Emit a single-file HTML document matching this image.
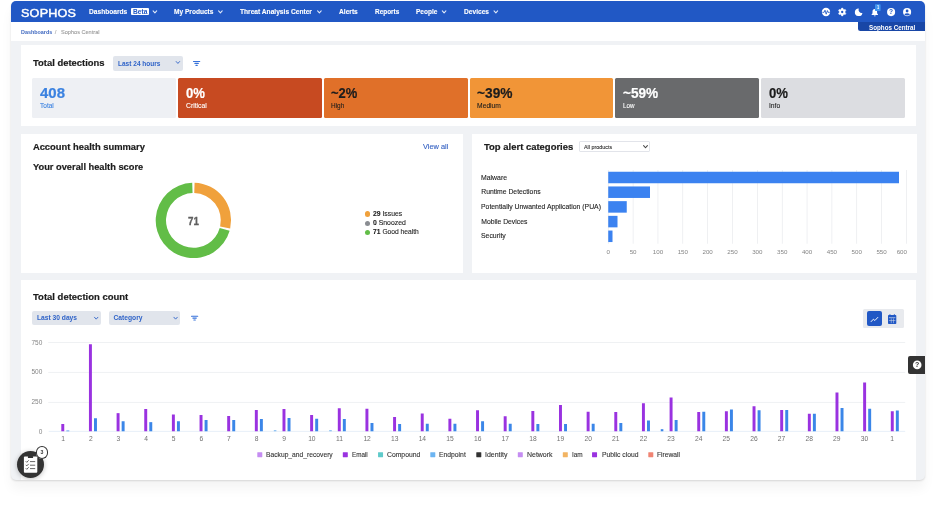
<!DOCTYPE html>
<html lang="en"><head><meta charset="utf-8"><title>Sophos Central - Dashboards</title>
<style>
html,body{margin:0;padding:0;background:#fff}
body{width:936px;height:506px;overflow:hidden;position:relative;font-family:"Liberation Sans",sans-serif;-webkit-font-smoothing:antialiased}
div,svg{position:absolute}
.t{position:absolute;white-space:nowrap;line-height:1;display:block}
.t b{font-weight:700}
.s{-webkit-text-stroke:.1px currentColor}
.h{-webkit-text-stroke:.2px currentColor}
</style></head>
<body>
<div id="frame" style="left:10.6px;top:1.1px;width:914.6px;height:478.7px;background:#f0f2f5;border-radius:5px;box-shadow:0 1px 2px rgba(0,0,0,.13),0 9px 12px rgba(0,0,0,.045);overflow:hidden">
<div style="left:-10.6px;top:-1.1px;width:936px;height:506px">
<div style="left:0.00px;top:0.00px;width:936.00px;height:22.30px;background:#2158c5;"></div>
<div style="left:0.00px;top:22.30px;width:936.00px;height:18.60px;background:#fff;"></div>
<div style="left:857.50px;top:22.30px;width:70.00px;height:9.00px;background:#1846a6;border-bottom-left-radius:2.5px"></div>
<div style="left:131.20px;top:8.20px;width:17.60px;height:6.80px;background:#fff;border-radius:1px"></div>
<div style="left:20.60px;top:45.20px;width:895.90px;height:80.80px;background:#fff;"></div>
<div style="left:20.60px;top:133.75px;width:442.90px;height:138.85px;background:#fff;"></div>
<div style="left:472.00px;top:133.75px;width:444.50px;height:138.85px;background:#fff;"></div>
<div style="left:20.60px;top:280.40px;width:895.60px;height:210.00px;background:#fff;"></div>
<div style="left:32.25px;top:77.90px;width:143.75px;height:40.40px;background:#eef0f4;border-radius:1.5px"></div>
<div style="left:178.00px;top:77.90px;width:143.75px;height:40.40px;background:#c74a21;border-radius:1.5px"></div>
<div style="left:323.75px;top:77.90px;width:143.75px;height:40.40px;background:#e07029;border-radius:1.5px"></div>
<div style="left:469.50px;top:77.90px;width:143.75px;height:40.40px;background:#f19537;border-radius:1.5px"></div>
<div style="left:615.25px;top:77.90px;width:143.75px;height:40.40px;background:#696a6c;border-radius:1.5px"></div>
<div style="left:761.00px;top:77.90px;width:143.75px;height:40.40px;background:#dcdde1;border-radius:1.5px"></div>
<div style="left:113.00px;top:56.00px;width:69.50px;height:14.50px;background:#e1e5ec;border-radius:2px"></div>
<div style="left:32.00px;top:311.00px;width:69.00px;height:14.00px;background:#e1e5ec;border-radius:2px"></div>
<div style="left:108.50px;top:311.00px;width:71.50px;height:14.00px;background:#e1e5ec;border-radius:2px"></div>
<div style="left:579.25px;top:140.70px;width:70.75px;height:11.80px;background:#fff;border-radius:2px;box-shadow:inset 0 0 0 .7px #d9dce3"></div>
<div style="left:863.00px;top:309.00px;width:41.10px;height:19.20px;background:#e8eaee;border-radius:1.5px"></div>
<div style="left:867.00px;top:311.20px;width:14.50px;height:14.60px;background:#2158c5;border-radius:2px"></div>
<div style="left:908.25px;top:355.75px;width:20.00px;height:18.25px;background:#333;border-radius:2px 0 0 2px"></div>
<div style="left:364.80px;top:211.40px;width:5.40px;height:5.40px;background:#f0a13c;border-radius:50%"></div>
<div style="left:364.80px;top:220.60px;width:5.40px;height:5.40px;background:#8a8d92;border-radius:50%"></div>
<div style="left:364.80px;top:229.80px;width:5.40px;height:5.40px;background:#62bd47;border-radius:50%"></div>
<div style="left:17.00px;top:450.60px;width:27.40px;height:27.40px;background:#333;border-radius:50%;box-shadow:0 1px 5px rgba(0,0,0,.25)"></div>
<div style="left:35.50px;top:446.00px;width:12.80px;height:12.80px;background:#fff;border-radius:50%;box-shadow:inset 0 0 0 1px #333"></div>
<div id="tx" style="left:0;top:0;width:936px;height:506px;will-change:transform">
<svg width="936" height="506" viewBox="0 0 936 506" style="left:0;top:0">
<rect x="607.95" y="170.00" width="0.60" height="73.75" fill="#e4e6ea"/>
<rect x="632.80" y="170.00" width="0.60" height="73.75" fill="#e4e6ea"/>
<rect x="657.65" y="170.00" width="0.60" height="73.75" fill="#e4e6ea"/>
<rect x="682.50" y="170.00" width="0.60" height="73.75" fill="#e4e6ea"/>
<rect x="707.35" y="170.00" width="0.60" height="73.75" fill="#e4e6ea"/>
<rect x="732.20" y="170.00" width="0.60" height="73.75" fill="#e4e6ea"/>
<rect x="757.05" y="170.00" width="0.60" height="73.75" fill="#e4e6ea"/>
<rect x="781.90" y="170.00" width="0.60" height="73.75" fill="#e4e6ea"/>
<rect x="806.75" y="170.00" width="0.60" height="73.75" fill="#e4e6ea"/>
<rect x="831.60" y="170.00" width="0.60" height="73.75" fill="#e4e6ea"/>
<rect x="856.45" y="170.00" width="0.60" height="73.75" fill="#e4e6ea"/>
<rect x="881.30" y="170.00" width="0.60" height="73.75" fill="#e4e6ea"/>
<rect x="906.15" y="170.00" width="0.60" height="73.75" fill="#e4e6ea"/>
<rect x="608.25" y="171.75" width="290.75" height="11.50" fill="#3b82f0"/>
<rect x="608.25" y="186.45" width="41.75" height="11.50" fill="#3b82f0"/>
<rect x="608.25" y="201.15" width="18.50" height="11.50" fill="#3b82f0"/>
<rect x="608.25" y="215.85" width="9.25" height="11.50" fill="#3b82f0"/>
<rect x="608.25" y="230.55" width="4.25" height="11.50" fill="#3b82f0"/>
<rect x="48.20" y="342.05" width="857.00" height="0.70" fill="#e9ebee"/>
<rect x="48.20" y="371.95" width="857.00" height="0.70" fill="#e9ebee"/>
<rect x="48.20" y="401.95" width="857.00" height="0.70" fill="#e9ebee"/>
<rect x="48.70" y="430.90" width="856.50" height="0.70" fill="#dde8f5"/>
<rect x="61.30" y="424.00" width="2.95" height="7.25" fill="#9a32e0"/>
<rect x="66.35" y="430.55" width="2.95" height="0.70" fill="#3b86e8"/>
<rect x="88.95" y="344.25" width="2.95" height="87.00" fill="#9a32e0"/>
<rect x="94.00" y="418.25" width="2.95" height="13.00" fill="#3b86e8"/>
<rect x="116.60" y="413.15" width="2.95" height="18.10" fill="#9a32e0"/>
<rect x="121.65" y="421.25" width="2.95" height="10.00" fill="#3b86e8"/>
<rect x="144.25" y="409.00" width="2.95" height="22.25" fill="#9a32e0"/>
<rect x="149.30" y="422.15" width="2.95" height="9.10" fill="#3b86e8"/>
<rect x="171.90" y="414.50" width="2.95" height="16.75" fill="#9a32e0"/>
<rect x="176.95" y="421.25" width="2.95" height="10.00" fill="#3b86e8"/>
<rect x="199.55" y="415.00" width="2.95" height="16.25" fill="#9a32e0"/>
<rect x="204.60" y="420.00" width="2.95" height="11.25" fill="#3b86e8"/>
<rect x="227.20" y="416.00" width="2.95" height="15.25" fill="#9a32e0"/>
<rect x="232.25" y="420.00" width="2.95" height="11.25" fill="#3b86e8"/>
<rect x="254.85" y="410.00" width="2.95" height="21.25" fill="#9a32e0"/>
<rect x="259.90" y="419.00" width="2.95" height="12.25" fill="#3b86e8"/>
<rect x="282.50" y="409.00" width="2.95" height="22.25" fill="#9a32e0"/>
<rect x="287.55" y="418.00" width="2.95" height="13.25" fill="#3b86e8"/>
<rect x="310.15" y="415.00" width="2.95" height="16.25" fill="#9a32e0"/>
<rect x="315.20" y="418.75" width="2.95" height="12.50" fill="#3b86e8"/>
<rect x="337.80" y="408.25" width="2.95" height="23.00" fill="#9a32e0"/>
<rect x="342.85" y="419.00" width="2.95" height="12.25" fill="#3b86e8"/>
<rect x="365.45" y="408.75" width="2.95" height="22.50" fill="#9a32e0"/>
<rect x="370.50" y="423.00" width="2.95" height="8.25" fill="#3b86e8"/>
<rect x="393.10" y="417.00" width="2.95" height="14.25" fill="#9a32e0"/>
<rect x="398.15" y="424.00" width="2.95" height="7.25" fill="#3b86e8"/>
<rect x="420.75" y="413.50" width="2.95" height="17.75" fill="#9a32e0"/>
<rect x="425.80" y="423.75" width="2.95" height="7.50" fill="#3b86e8"/>
<rect x="448.40" y="418.75" width="2.95" height="12.50" fill="#9a32e0"/>
<rect x="453.45" y="423.75" width="2.95" height="7.50" fill="#3b86e8"/>
<rect x="476.05" y="410.25" width="2.95" height="21.00" fill="#9a32e0"/>
<rect x="481.10" y="421.25" width="2.95" height="10.00" fill="#3b86e8"/>
<rect x="503.70" y="416.25" width="2.95" height="15.00" fill="#9a32e0"/>
<rect x="508.75" y="423.75" width="2.95" height="7.50" fill="#3b86e8"/>
<rect x="531.35" y="411.00" width="2.95" height="20.25" fill="#9a32e0"/>
<rect x="536.40" y="424.00" width="2.95" height="7.25" fill="#3b86e8"/>
<rect x="559.00" y="405.00" width="2.95" height="26.25" fill="#9a32e0"/>
<rect x="564.05" y="424.00" width="2.95" height="7.25" fill="#3b86e8"/>
<rect x="586.65" y="411.75" width="2.95" height="19.50" fill="#9a32e0"/>
<rect x="591.70" y="423.75" width="2.95" height="7.50" fill="#3b86e8"/>
<rect x="614.30" y="412.00" width="2.95" height="19.25" fill="#9a32e0"/>
<rect x="619.35" y="423.00" width="2.95" height="8.25" fill="#3b86e8"/>
<rect x="641.95" y="403.25" width="2.95" height="28.00" fill="#9a32e0"/>
<rect x="647.00" y="420.50" width="2.95" height="10.75" fill="#3b86e8"/>
<rect x="669.60" y="397.50" width="2.95" height="33.75" fill="#9a32e0"/>
<rect x="674.65" y="420.00" width="2.95" height="11.25" fill="#3b86e8"/>
<rect x="697.25" y="412.00" width="2.95" height="19.25" fill="#9a32e0"/>
<rect x="702.30" y="411.75" width="2.95" height="19.50" fill="#3b86e8"/>
<rect x="724.90" y="411.25" width="2.95" height="20.00" fill="#9a32e0"/>
<rect x="729.95" y="409.50" width="2.95" height="21.75" fill="#3b86e8"/>
<rect x="752.55" y="406.25" width="2.95" height="25.00" fill="#9a32e0"/>
<rect x="757.60" y="410.25" width="2.95" height="21.00" fill="#3b86e8"/>
<rect x="780.20" y="410.00" width="2.95" height="21.25" fill="#9a32e0"/>
<rect x="785.25" y="410.00" width="2.95" height="21.25" fill="#3b86e8"/>
<rect x="807.85" y="413.75" width="2.95" height="17.50" fill="#9a32e0"/>
<rect x="812.90" y="413.75" width="2.95" height="17.50" fill="#3b86e8"/>
<rect x="835.50" y="392.50" width="2.95" height="38.75" fill="#9a32e0"/>
<rect x="840.55" y="408.00" width="2.95" height="23.25" fill="#3b86e8"/>
<rect x="863.15" y="382.50" width="2.95" height="48.75" fill="#9a32e0"/>
<rect x="868.20" y="408.75" width="2.95" height="22.50" fill="#3b86e8"/>
<rect x="890.80" y="411.25" width="2.95" height="20.00" fill="#9a32e0"/>
<rect x="895.85" y="410.50" width="2.95" height="20.75" fill="#3b86e8"/>
<rect x="273.80" y="430.20" width="2.60" height="1.05" fill="#7db8f0"/>
<rect x="329.20" y="430.20" width="2.60" height="1.05" fill="#7db8f0"/>
<rect x="660.75" y="429.20" width="2.60" height="2.05" fill="#3b86e8"/>
<rect x="257.30" y="452.20" width="5.00" height="5.00" fill="#c58df2" rx="0.4"/>
<rect x="342.80" y="452.20" width="5.00" height="5.00" fill="#9a32e0" rx="0.4"/>
<rect x="378.05" y="452.20" width="5.00" height="5.00" fill="#5fcaca" rx="0.4"/>
<rect x="430.30" y="452.20" width="5.00" height="5.00" fill="#6db5f2" rx="0.4"/>
<rect x="476.30" y="452.20" width="5.00" height="5.00" fill="#333" rx="0.4"/>
<rect x="517.80" y="452.20" width="5.00" height="5.00" fill="#c58df2" rx="0.4"/>
<rect x="562.80" y="452.20" width="5.00" height="5.00" fill="#f2b463" rx="0.4"/>
<rect x="592.05" y="452.20" width="5.00" height="5.00" fill="#9a32e0" rx="0.4"/>
<rect x="648.30" y="452.20" width="5.00" height="5.00" fill="#f08473" rx="0.4"/>
<path d="M153.10 10.95L154.90 12.85L156.70 10.95" fill="none" stroke="#dfe8f8" stroke-width="1.1" stroke-linecap="round" stroke-linejoin="round"/>
<path d="M218.60 10.95L220.40 12.85L222.20 10.95" fill="none" stroke="#dfe8f8" stroke-width="1.1" stroke-linecap="round" stroke-linejoin="round"/>
<path d="M317.60 10.95L319.40 12.85L321.20 10.95" fill="none" stroke="#dfe8f8" stroke-width="1.1" stroke-linecap="round" stroke-linejoin="round"/>
<path d="M442.30 10.95L444.10 12.85L445.90 10.95" fill="none" stroke="#dfe8f8" stroke-width="1.1" stroke-linecap="round" stroke-linejoin="round"/>
<path d="M494.05 10.95L495.85 12.85L497.65 10.95" fill="none" stroke="#dfe8f8" stroke-width="1.1" stroke-linecap="round" stroke-linejoin="round"/>
<path d="M176.20 61.55L177.90 63.45L179.60 61.55" fill="none" stroke="#2f63c8" stroke-width="0.9" stroke-linecap="round" stroke-linejoin="round"/>
<path d="M94.50 317.25L96.20 319.15L97.90 317.25" fill="none" stroke="#2f63c8" stroke-width="0.9" stroke-linecap="round" stroke-linejoin="round"/>
<path d="M173.90 317.25L175.60 319.15L177.30 317.25" fill="none" stroke="#2f63c8" stroke-width="0.9" stroke-linecap="round" stroke-linejoin="round"/>
<path d="M643.60 145.65L645.50 147.75L647.40 145.65" fill="none" stroke="#444" stroke-width="1.05" stroke-linecap="round" stroke-linejoin="round"/>
<g stroke="#3772da" stroke-width="1.15" stroke-linecap="round"><path d="M193.50 61.5h6.2M194.90 63.40h3.4M195.90 65.30h1.4"/></g>
<g stroke="#3772da" stroke-width="1.15" stroke-linecap="round"><path d="M191.50 316.2h6.2M192.90 318.10h3.4M193.90 320.00h1.4"/></g>
<circle cx="826" cy="12" r="4.15" fill="#fff"/>
<path d="M822.4 12.3h1.7l0.9-2.1 1.2 4 1.2-3.6 0.6 1.7h1.8" fill="none" stroke="#2158c5" stroke-width="0.85" stroke-linejoin="round"/>
<path d="M841.68 8.08L842.72 8.08L843.31 9.32L843.97 9.70L845.33 9.60L845.85 10.49L845.08 11.62L845.08 12.38L845.85 13.51L845.33 14.40L843.97 14.30L843.31 14.68L842.72 15.92L841.68 15.92L841.09 14.68L840.43 14.30L839.07 14.40L838.55 13.51L839.32 12.38L839.32 11.62L838.55 10.49L839.07 9.60L840.43 9.70L841.09 9.32Z" fill="#fff" stroke="#fff" stroke-width="0.5" stroke-linejoin="round"/>
<circle cx="842.2" cy="12" r="1.15" fill="#2158c5"/>
<path d="M858.80 8.50A3.8 3.8 0 1 0 862.40 12.90A3.2 3.2 0 0 1 858.80 8.50Z" fill="#fff"/>
<path d="M874.80 9.10c1.6 0 2.3 1.2 2.3 2.6v1.6l0.9 1.2v0.5h-6.4v-0.5l0.9-1.2v-1.6c0-1.4 0.7-2.6 2.3-2.6z" fill="#fff"/>
<path d="M873.90 15.40h1.8a0.9 0.9 0 0 1-1.8 0z" fill="#fff"/>
<rect x="875" y="4.3" width="5.6" height="6.6" rx="0.6" fill="#3f93ee"/>
<circle cx="891.1" cy="12.1" r="4.05" fill="#fff"/>
<text x="891.1" y="14.45" font-family="Liberation Sans, sans-serif" font-weight="700" font-size="6.6" fill="#2158c5" text-anchor="middle">?</text>
<circle cx="907.1" cy="12.1" r="4.05" fill="#fff"/>
<clipPath id="uc"><circle cx="907.1" cy="12.1" r="3.5"/></clipPath>
<circle cx="907.1" cy="11.0" r="1.4" fill="#2158c5"/>
<ellipse cx="907.1" cy="15.399999999999999" rx="2.9" ry="2.1" fill="#2158c5" clip-path="url(#uc)"/>
<path d="M194.58 182.72A37.7 37.7 0 0 1 230.19 228.62L220.14 226.38A27.4 27.4 0 0 0 194.26 193.01Z" fill="#f0a13c"/>
<path d="M229.64 230.79A37.7 37.7 0 1 1 192.22 182.72L192.54 193.01A27.4 27.4 0 1 0 219.74 227.95Z" fill="#62bd47"/>
<path d="M871.1 321.6l2.3-2.4 1.5 1.3 2.9-3.1" fill="none" stroke="#fff" stroke-width="0.95" stroke-linecap="round" stroke-linejoin="round"/>
<g fill="#2158c5"><rect x="888" y="315.1" width="8.3" height="8.9" rx="0.8"/><rect x="889.4" y="314.2" width="1.1" height="1.8" rx="0.4"/><rect x="893.8" y="314.2" width="1.1" height="1.8" rx="0.4"/></g>
<g fill="#e8eaee"><rect x="888.9" y="317.5" width="6.5" height="0.6"/><rect x="888.9" y="320.3" width="6.5" height="0.45"/><rect x="890.9" y="318.4" width="0.45" height="4.8"/><rect x="893.1" y="318.4" width="0.45" height="4.8"/></g>
<circle cx="917.2" cy="364.9" r="4.3" fill="#fff"/>
<text x="917.2" y="367.4" font-family="Liberation Sans, sans-serif" font-weight="700" font-size="7" fill="#333" text-anchor="middle">?</text>
<g><rect x="23.9" y="456.6" width="13.4" height="16.2" rx="1" fill="#fff"/><rect x="27.9" y="456.1" width="5.2" height="2" rx="0.7" fill="#333"/><g stroke="#333" stroke-width="0.75" fill="none" stroke-linecap="round"><path d="M30.4 461.6h4.4M30.4 465.2h4.4M30.4 468.6h4.4"/><path d="M26 461.5l0.8 0.8 1.6-1.7M26 465.1l0.8 0.8 1.6-1.7M26 468.5l0.8 0.8 1.6-1.7"/></g></g>
</svg>
<span id="t0" class="t" style="left:20.80px;top:7.00px;font-size:11.6px;color:#fff;transform:scaleX(1.086);transform-origin:0 0;-webkit-text-stroke:.45px #fff;letter-spacing:.2px">SOPHOS</span>
<span id="t1" class="t" style="left:88.70px;top:8.00px;font-size:7.5px;color:#fff;font-weight:700;transform:scaleX(0.883);transform-origin:0 0;-webkit-text-stroke:.12px #fff">Dashboards</span>
<span id="t2" class="t" style="left:133.00px;top:8.00px;font-size:7.2px;color:#2158c5;font-weight:700;transform:scaleX(0.923);transform-origin:0 0">Beta</span>
<span id="t3" class="t" style="left:173.80px;top:8.00px;font-size:7.5px;color:#fff;font-weight:700;transform:scaleX(0.877);transform-origin:0 0;-webkit-text-stroke:.12px #fff">My Products</span>
<span id="t4" class="t" style="left:240.30px;top:8.00px;font-size:7.5px;color:#fff;font-weight:700;transform:scaleX(0.883);transform-origin:0 0;-webkit-text-stroke:.12px #fff">Threat Analysis Center</span>
<span id="t5" class="t" style="left:339.20px;top:8.00px;font-size:7.5px;color:#fff;font-weight:700;transform:scaleX(0.884);transform-origin:0 0;-webkit-text-stroke:.12px #fff">Alerts</span>
<span id="t6" class="t" style="left:374.70px;top:8.00px;font-size:7.5px;color:#fff;font-weight:700;transform:scaleX(0.857);transform-origin:0 0;-webkit-text-stroke:.12px #fff">Reports</span>
<span id="t7" class="t" style="left:415.70px;top:8.00px;font-size:7.5px;color:#fff;font-weight:700;transform:scaleX(0.874);transform-origin:0 0;-webkit-text-stroke:.12px #fff">People</span>
<span id="t8" class="t" style="left:463.80px;top:8.00px;font-size:7.5px;color:#fff;font-weight:700;transform:scaleX(0.882);transform-origin:0 0;-webkit-text-stroke:.12px #fff">Devices</span>
<span id="t9" class="t" style="left:868.75px;top:25.00px;font-size:6.5px;color:#fff;font-weight:700;transform:scaleX(0.962);transform-origin:0 0">Sophos Central</span>
<span id="t10" class="t" style="left:876.60px;top:6.00px;font-size:4.6px;color:#fff;font-weight:700;transform:scaleX(0.859);transform-origin:0 0">1</span>
<span id="t11" class="t" style="left:20.80px;top:29.00px;font-size:6.1px;color:#3f68c0;font-weight:700;transform:scaleX(0.886);transform-origin:0 0">Dashboards</span>
<span id="t12" class="t s" style="left:54.80px;top:29.00px;font-size:6.1px;color:#aaa">/</span>
<span id="t13" class="t s" style="left:60.50px;top:29.00px;font-size:6.1px;color:#9a9a9a;transform:scaleX(0.916);transform-origin:0 0">Sophos Central</span>
<span id="t14" class="t h" style="left:33.40px;top:58.00px;font-size:9.4px;color:#1c1c1c;font-weight:700;transform:scaleX(1.006);transform-origin:0 0">Total detections</span>
<span id="t15" class="t" style="left:118.25px;top:61.00px;font-size:6.7px;color:#2f63c8;font-weight:700;transform:scaleX(0.977);transform-origin:0 0">Last 24 hours</span>
<span id="t16" class="t h" style="left:39.85px;top:87.00px;font-size:13.8px;color:#3b82e0;font-weight:700;transform:scaleX(1.085);transform-origin:0 0">408</span>
<span id="t17" class="t s" style="left:39.85px;top:103.00px;font-size:6.7px;color:#3b82e0;transform:scaleX(0.977);transform-origin:0 0">Total</span>
<span id="t18" class="t h" style="left:185.60px;top:87.00px;font-size:13.8px;color:#fff;font-weight:700;transform:scaleX(0.952);transform-origin:0 0">0%</span>
<span id="t19" class="t s" style="left:185.60px;top:103.00px;font-size:6.7px;color:#fff;transform:scaleX(1.015);transform-origin:0 0">Critical</span>
<span id="t20" class="t h" style="left:331.35px;top:87.00px;font-size:13.8px;color:#1d1d1d;font-weight:700;transform:scaleX(0.938);transform-origin:0 0">~2%</span>
<span id="t21" class="t s" style="left:331.35px;top:103.00px;font-size:6.7px;color:#1d1d1d;transform:scaleX(0.963);transform-origin:0 0">High</span>
<span id="t22" class="t h" style="left:477.10px;top:87.00px;font-size:13.8px;color:#1d1d1d;font-weight:700;transform:scaleX(0.995);transform-origin:0 0">~39%</span>
<span id="t23" class="t s" style="left:477.10px;top:103.00px;font-size:6.7px;color:#1d1d1d">Medium</span>
<span id="t24" class="t h" style="left:622.85px;top:87.00px;font-size:13.8px;color:#fff;font-weight:700;transform:scaleX(0.988);transform-origin:0 0">~59%</span>
<span id="t25" class="t s" style="left:622.85px;top:103.00px;font-size:6.7px;color:#fff;transform:scaleX(0.936);transform-origin:0 0">Low</span>
<span id="t26" class="t h" style="left:768.60px;top:87.00px;font-size:13.8px;color:#1d1d1d;font-weight:700;transform:scaleX(0.952);transform-origin:0 0">0%</span>
<span id="t27" class="t s" style="left:768.60px;top:103.00px;font-size:6.7px;color:#1d1d1d;transform:scaleX(1.008);transform-origin:0 0">Info</span>
<span id="t28" class="t h" style="left:32.90px;top:142.00px;font-size:9.4px;color:#1c1c1c;font-weight:700">Account health summary</span>
<span id="t29" class="t h" style="left:32.90px;top:162.00px;font-size:9.4px;color:#1c1c1c;font-weight:700;transform:scaleX(0.990);transform-origin:0 0">Your overall health score</span>
<span id="t30" class="t s" style="left:422.90px;top:144.00px;font-size:6.9px;color:#3461c2;transform:scaleX(1.071);transform-origin:0 0">View all</span>
<span id="t31" class="t" style="left:187.90px;top:217.00px;font-size:10.4px;color:#606060;font-weight:700;transform:scaleX(0.943);transform-origin:0 0;-webkit-text-stroke:.3px #606060">71</span>
<span id="t32" class="t s" style="left:373.10px;top:211.00px;font-size:6.7px;color:#222;transform:scaleX(1.016);transform-origin:0 0"><b>29</b> Issues</span>
<span id="t33" class="t s" style="left:373.10px;top:220.00px;font-size:6.7px;color:#222;transform:scaleX(1.025);transform-origin:0 0"><b>0</b> Snoozed</span>
<span id="t34" class="t s" style="left:373.10px;top:229.00px;font-size:6.7px;color:#222"><b>71</b> Good health</span>
<span id="t35" class="t h" style="left:483.75px;top:142.00px;font-size:9.4px;color:#1c1c1c;font-weight:700;transform:scaleX(1.010);transform-origin:0 0">Top alert categories</span>
<span id="t36" class="t s" style="left:583.75px;top:145.00px;font-size:5.2px;color:#333;transform:scaleX(1.040);transform-origin:0 0">All products</span>
<span id="t37" class="t s" style="left:481.25px;top:175.00px;font-size:6.8px;color:#222;transform:scaleX(1.012);transform-origin:0 0">Malware</span>
<span id="t38" class="t s" style="left:481.25px;top:189.00px;font-size:6.8px;color:#222">Runtime Detections</span>
<span id="t39" class="t s" style="left:481.25px;top:204.00px;font-size:6.8px;color:#222;transform:scaleX(1.008);transform-origin:0 0">Potentially Unwanted Application (PUA)</span>
<span id="t40" class="t s" style="left:481.25px;top:219.00px;font-size:6.8px;color:#222">Mobile Devices</span>
<span id="t41" class="t s" style="left:481.25px;top:233.00px;font-size:6.8px;color:#222;transform:scaleX(1.010);transform-origin:0 0">Security</span>
<span id="t42" class="t" style="left:608.25px;top:249.00px;font-size:6.2px;color:#858585;transform:translateX(-50%);transform-origin:50% 0">0</span>
<span id="t43" class="t" style="left:633.10px;top:249.00px;font-size:6.2px;color:#858585;transform:translateX(-50%);transform-origin:50% 0">50</span>
<span id="t44" class="t" style="left:657.95px;top:249.00px;font-size:6.2px;color:#858585;transform:translateX(-50%);transform-origin:50% 0">100</span>
<span id="t45" class="t" style="left:682.80px;top:249.00px;font-size:6.2px;color:#858585;transform:translateX(-50%);transform-origin:50% 0">150</span>
<span id="t46" class="t" style="left:707.65px;top:249.00px;font-size:6.2px;color:#858585;transform:translateX(-50%);transform-origin:50% 0">200</span>
<span id="t47" class="t" style="left:732.50px;top:249.00px;font-size:6.2px;color:#858585;transform:translateX(-50%);transform-origin:50% 0">250</span>
<span id="t48" class="t" style="left:757.35px;top:249.00px;font-size:6.2px;color:#858585;transform:translateX(-50%);transform-origin:50% 0">300</span>
<span id="t49" class="t" style="left:782.20px;top:249.00px;font-size:6.2px;color:#858585;transform:translateX(-50%);transform-origin:50% 0">350</span>
<span id="t50" class="t" style="left:807.05px;top:249.00px;font-size:6.2px;color:#858585;transform:translateX(-50%);transform-origin:50% 0">400</span>
<span id="t51" class="t" style="left:831.90px;top:249.00px;font-size:6.2px;color:#858585;transform:translateX(-50%);transform-origin:50% 0">450</span>
<span id="t52" class="t" style="left:856.75px;top:249.00px;font-size:6.2px;color:#858585;transform:translateX(-50%);transform-origin:50% 0">500</span>
<span id="t53" class="t" style="left:881.60px;top:249.00px;font-size:6.2px;color:#858585;transform:translateX(-50%);transform-origin:50% 0">550</span>
<span id="t54" class="t" style="left:907.00px;top:249.00px;font-size:6.2px;color:#858585;transform:translateX(-100%);transform-origin:100% 0">600</span>
<span id="t55" class="t h" style="left:33.00px;top:292.00px;font-size:9.4px;color:#1c1c1c;font-weight:700;transform:scaleX(1.012);transform-origin:0 0">Total detection count</span>
<span id="t56" class="t" style="left:36.90px;top:315.00px;font-size:6.7px;color:#2f63c8;font-weight:700">Last 30 days</span>
<span id="t57" class="t" style="left:113.50px;top:315.00px;font-size:6.7px;color:#2f63c8;font-weight:700">Category</span>
<span id="t58" class="t" style="left:42.30px;top:340.00px;font-size:6.5px;color:#858585;transform:translateX(-100%);transform-origin:100% 0">750</span>
<span id="t59" class="t" style="left:42.30px;top:369.00px;font-size:6.5px;color:#858585;transform:translateX(-100%);transform-origin:100% 0">500</span>
<span id="t60" class="t" style="left:42.30px;top:399.00px;font-size:6.5px;color:#858585;transform:translateX(-100%);transform-origin:100% 0">250</span>
<span id="t61" class="t" style="left:42.30px;top:429.00px;font-size:6.5px;color:#858585;transform:translateX(-100%);transform-origin:100% 0">0</span>
<span id="t62" class="t" style="left:63.20px;top:436.00px;font-size:6.7px;color:#707070;transform:translateX(-50%);transform-origin:50% 0">1</span>
<span id="t63" class="t" style="left:90.83px;top:436.00px;font-size:6.7px;color:#707070;transform:translateX(-50%);transform-origin:50% 0">2</span>
<span id="t64" class="t" style="left:118.46px;top:436.00px;font-size:6.7px;color:#707070;transform:translateX(-50%);transform-origin:50% 0">3</span>
<span id="t65" class="t" style="left:146.09px;top:436.00px;font-size:6.7px;color:#707070;transform:translateX(-50%);transform-origin:50% 0">4</span>
<span id="t66" class="t" style="left:173.72px;top:436.00px;font-size:6.7px;color:#707070;transform:translateX(-50%);transform-origin:50% 0">5</span>
<span id="t67" class="t" style="left:201.35px;top:436.00px;font-size:6.7px;color:#707070;transform:translateX(-50%);transform-origin:50% 0">6</span>
<span id="t68" class="t" style="left:228.98px;top:436.00px;font-size:6.7px;color:#707070;transform:translateX(-50%);transform-origin:50% 0">7</span>
<span id="t69" class="t" style="left:256.61px;top:436.00px;font-size:6.7px;color:#707070;transform:translateX(-50%);transform-origin:50% 0">8</span>
<span id="t70" class="t" style="left:284.24px;top:436.00px;font-size:6.7px;color:#707070;transform:translateX(-50%);transform-origin:50% 0">9</span>
<span id="t71" class="t" style="left:311.87px;top:436.00px;font-size:6.7px;color:#707070;transform:translateX(-50%);transform-origin:50% 0">10</span>
<span id="t72" class="t" style="left:339.50px;top:436.00px;font-size:6.7px;color:#707070;transform:translateX(-50%);transform-origin:50% 0">11</span>
<span id="t73" class="t" style="left:367.13px;top:436.00px;font-size:6.7px;color:#707070;transform:translateX(-50%);transform-origin:50% 0">12</span>
<span id="t74" class="t" style="left:394.76px;top:436.00px;font-size:6.7px;color:#707070;transform:translateX(-50%);transform-origin:50% 0">13</span>
<span id="t75" class="t" style="left:422.39px;top:436.00px;font-size:6.7px;color:#707070;transform:translateX(-50%);transform-origin:50% 0">14</span>
<span id="t76" class="t" style="left:450.02px;top:436.00px;font-size:6.7px;color:#707070;transform:translateX(-50%);transform-origin:50% 0">15</span>
<span id="t77" class="t" style="left:477.65px;top:436.00px;font-size:6.7px;color:#707070;transform:translateX(-50%);transform-origin:50% 0">16</span>
<span id="t78" class="t" style="left:505.28px;top:436.00px;font-size:6.7px;color:#707070;transform:translateX(-50%);transform-origin:50% 0">17</span>
<span id="t79" class="t" style="left:532.91px;top:436.00px;font-size:6.7px;color:#707070;transform:translateX(-50%);transform-origin:50% 0">18</span>
<span id="t80" class="t" style="left:560.54px;top:436.00px;font-size:6.7px;color:#707070;transform:translateX(-50%);transform-origin:50% 0">19</span>
<span id="t81" class="t" style="left:588.17px;top:436.00px;font-size:6.7px;color:#707070;transform:translateX(-50%);transform-origin:50% 0">20</span>
<span id="t82" class="t" style="left:615.80px;top:436.00px;font-size:6.7px;color:#707070;transform:translateX(-50%);transform-origin:50% 0">21</span>
<span id="t83" class="t" style="left:643.43px;top:436.00px;font-size:6.7px;color:#707070;transform:translateX(-50%);transform-origin:50% 0">22</span>
<span id="t84" class="t" style="left:671.06px;top:436.00px;font-size:6.7px;color:#707070;transform:translateX(-50%);transform-origin:50% 0">23</span>
<span id="t85" class="t" style="left:698.69px;top:436.00px;font-size:6.7px;color:#707070;transform:translateX(-50%);transform-origin:50% 0">24</span>
<span id="t86" class="t" style="left:726.32px;top:436.00px;font-size:6.7px;color:#707070;transform:translateX(-50%);transform-origin:50% 0">25</span>
<span id="t87" class="t" style="left:753.95px;top:436.00px;font-size:6.7px;color:#707070;transform:translateX(-50%);transform-origin:50% 0">26</span>
<span id="t88" class="t" style="left:781.58px;top:436.00px;font-size:6.7px;color:#707070;transform:translateX(-50%);transform-origin:50% 0">27</span>
<span id="t89" class="t" style="left:809.21px;top:436.00px;font-size:6.7px;color:#707070;transform:translateX(-50%);transform-origin:50% 0">28</span>
<span id="t90" class="t" style="left:836.84px;top:436.00px;font-size:6.7px;color:#707070;transform:translateX(-50%);transform-origin:50% 0">29</span>
<span id="t91" class="t" style="left:864.47px;top:436.00px;font-size:6.7px;color:#707070;transform:translateX(-50%);transform-origin:50% 0">30</span>
<span id="t92" class="t" style="left:892.10px;top:436.00px;font-size:6.7px;color:#707070;transform:translateX(-50%);transform-origin:50% 0">1</span>
<span id="t93" class="t s" style="left:265.75px;top:452.00px;font-size:6.6px;color:#333;transform:scaleX(1.017);transform-origin:0 0">Backup_and_recovery</span>
<span id="t94" class="t s" style="left:351.75px;top:452.00px;font-size:6.6px;color:#333;transform:scaleX(0.955);transform-origin:0 0">Email</span>
<span id="t95" class="t s" style="left:386.75px;top:452.00px;font-size:6.6px;color:#333;transform:scaleX(1.031);transform-origin:0 0">Compound</span>
<span id="t96" class="t s" style="left:438.75px;top:452.00px;font-size:6.6px;color:#333;transform:scaleX(1.028);transform-origin:0 0">Endpoint</span>
<span id="t97" class="t s" style="left:485.25px;top:452.00px;font-size:6.6px;color:#333;transform:scaleX(1.058);transform-origin:0 0">Identity</span>
<span id="t98" class="t s" style="left:526.75px;top:452.00px;font-size:6.6px;color:#333;transform:scaleX(1.054);transform-origin:0 0">Network</span>
<span id="t99" class="t s" style="left:571.50px;top:452.00px;font-size:6.6px;color:#333;transform:scaleX(0.977);transform-origin:0 0">Iam</span>
<span id="t100" class="t s" style="left:601.50px;top:452.00px;font-size:6.6px;color:#333;transform:scaleX(1.026);transform-origin:0 0">Public cloud</span>
<span id="t101" class="t s" style="left:657.25px;top:452.00px;font-size:6.6px;color:#333;transform:scaleX(1.012);transform-origin:0 0">Firewall</span>
<span id="t102" class="t" style="left:41.90px;top:450.00px;font-size:5.2px;color:#333;font-weight:700;transform:translateX(-50%);transform-origin:50% 0">3</span>
</div>
</div></div>
</body></html>
